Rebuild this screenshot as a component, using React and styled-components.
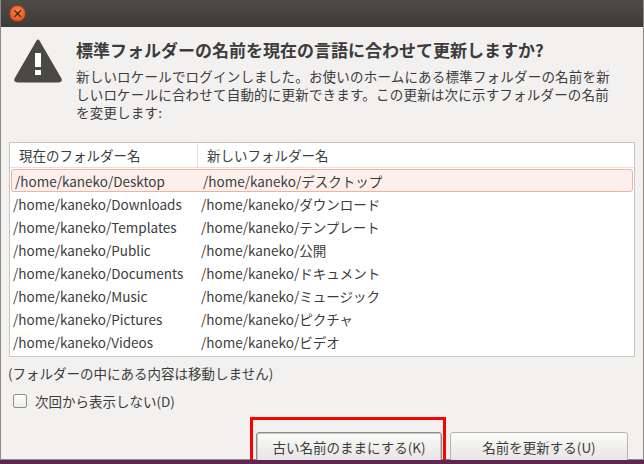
import React from 'react';
import styled, { createGlobalStyle } from 'styled-components';

const Global = createGlobalStyle`
  html, body { margin: 0; padding: 0; background: #5e2750; }
  body { font-family: "Noto Sans CJK JP", "DejaVu Sans", sans-serif; }
`;

const Window = styled.div`
  width: 644px; height: 460px; box-sizing: border-box;
  display: flex; flex-direction: column;
  background: #f2f1f0; border: 1px solid #8c8a85; border-top: none;
`;

const TitleBar = styled.div`
  height: 27px; flex: none;
  background: linear-gradient(#4d4c48, #3c3b37);
  display: flex; align-items: center; padding-left: 8px;
`;

const Close = styled.div`
  width: 15px; height: 15px; border-radius: 50%;
  background: radial-gradient(circle at 50% 35%, #f48456, #df4a16);
  border: 1px solid #9d3a10;
  color: #3a1a0a; font-size: 11px; line-height: 15px; text-align: center; font-weight: bold;
`;

const Body = styled.div`
  flex: 1; display: flex; flex-direction: column;
  padding: 8px 7px 0 7px; color: #3c3c3c;
`;

const Header = styled.div`
  display: flex; gap: 14px; padding: 0 6px; margin-top: 2px;
  svg { flex: none; margin-top: 2px; }
`;

const Texts = styled.div`display: flex; flex-direction: column;`;

const Heading = styled.div`
  font-size: 17px; font-weight: bold; line-height: 26px;
`;

const Desc = styled.div`
  font-size: 13.5px; line-height: 18px; margin-top: 4px; padding-right: 8px;
  letter-spacing: 0.2px;
`;

const Table = styled.div`
  margin: 21px 1px 0; background: #fff; border: 1px solid #c8c6c2;
  display: flex; flex-direction: column; padding-bottom: 3px;
`;

const Row = styled.div`
  display: grid; grid-template-columns: 188px 1fr;
  height: ${p => p.$head ? 24 : 23}px; align-items: center;
  font-size: 13.5px; color: #3c3c3c;
  ${p => p.$head && 'border-bottom: 1px solid #e4e2df; margin-bottom: 1px;'}
  ${p => p.$sel && 'background: #fdf0ec; border: 1px solid #f1b29e; border-radius: 3px; margin: 0 1px; height: 21px;'}
`;

const Cell = styled.div`
  padding-left: ${p => p.$head ? 9 : 3}px;
  white-space: nowrap; overflow: hidden;
  ${p => p.$head && p.$first && 'border-right: 1px solid #e4e2df; height: 100%; display: flex; align-items: center;'}
`;

const Note = styled.div`font-size: 13.5px; margin-top: 6px; line-height: 20px;`;

const Check = styled.label`
  display: flex; align-items: center; gap: 8px; font-size: 13.5px;
  margin: 8px 0 0 5px;
`;

const Box = styled.span`
  width: 12px; height: 12px; border: 1px solid #8f8d89; border-radius: 2px;
  background: linear-gradient(#fff, #ecebea);
`;

const Buttons = styled.div`
  display: flex; justify-content: flex-end; align-items: flex-start;
  gap: 4px; margin-top: 6px; padding-right: 8px;
`;

const Focus = styled.div`
  border: 3px solid #f00; padding: 12px 1px 8px 3px;
`;

const Button = styled.button`
  height: 30px; width: ${p => p.$w}px; margin-top: ${p => p.$top || 0}px;
  font-family: inherit; font-size: 13.5px; color: #3c3c3c;
  border: 1px solid ${p => p.$focus ? '#8f8d89' : '#b5b3af'}; border-radius: 3px;
  background: linear-gradient(#fbfbfa, #e6e5e3);
  box-shadow: ${p => p.$focus ? 'inset 0 0 0 1px #c9c7c3' : 'none'};
`;

const rows = [
  ['Desktop', 'デスクトップ'], ['Downloads', 'ダウンロード'], ['Templates', 'テンプレート'],
  ['Public', '公開'], ['Documents', 'ドキュメント'], ['Music', 'ミュージック'],
  ['Pictures', 'ピクチャ'], ['Videos', 'ビデオ'],
];

const Warn = () => (
  <svg width="48" height="44" viewBox="0 0 48 44">
    <path d="M24 2 L46 40 Q47 42 44 42 L4 42 Q1 42 2 40 Z" fill="#4a4946" stroke="#4a4946" strokeWidth="3" strokeLinejoin="round" />
    <rect x="21" y="14" width="6" height="14" fill="#fff" />
    <rect x="21" y="31" width="6" height="5" fill="#fff" />
  </svg>
);

export default function App() {
  return (
    <>
      <Global />
      <Window>
        <TitleBar><Close>×</Close></TitleBar>
        <Body>
          <Header>
            <Warn />
            <Texts>
              <Heading>標準フォルダーの名前を現在の言語に合わせて更新しますか?</Heading>
              <Desc>新しいロケールでログインしました。お使いのホームにある標準フォルダーの名前を新しいロケールに合わせて自動的に更新できます。この更新は次に示すフォルダーの名前を変更します:</Desc>
            </Texts>
          </Header>
          <Table>
            <Row $head>
              <Cell $head $first>現在のフォルダー名</Cell>
              <Cell $head>新しいフォルダー名</Cell>
            </Row>
            {rows.map(([a, b], i) => (
              <Row key={a} $sel={i === 0}>
                <Cell>/home/kaneko/{a}</Cell>
                <Cell>/home/kaneko/{b}</Cell>
              </Row>
            ))}
          </Table>
          <Note>(フォルダーの中にある内容は移動しません)</Note>
          <Check><Box />次回から表示しない(D)</Check>
          <Buttons>
            <Focus><Button $w={186} $focus>古い名前のままにする(K)</Button></Focus>
            <Button $w={178} $top={15}>名前を更新する(U)</Button>
          </Buttons>
        </Body>
      </Window>
    </>
  );
}
